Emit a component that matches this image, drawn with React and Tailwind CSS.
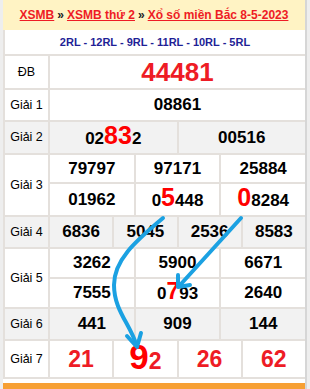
import React from "react";

const font = { fontFamily: '"Liberation Sans", Arial, sans-serif' };

const Hi = ({ children, size = "text-[25px]" }) => (
  <span className={`text-[#ff0000] ${size} leading-none`}>{children}</span>
);

// one result row: label cell + stacked cell lines
const Row = ({ label, gray, children }) => (
  <div className={`flex border-b-2 border-[#e4e0dc] ${gray ? "bg-[#f2f2f2]" : "bg-white"}`}>
    <div className="w-[45px] shrink-0 flex items-center justify-center border-r-2 border-[#e4e0dc] text-[12.5px] text-black">
      {label}
    </div>
    <div className="flex-1 flex flex-col">{children}</div>
  </div>
);

const Cells = ({ h, items, last }) => (
  <div className={`flex ${h} ${last ? "" : "border-b-2 border-[#e4e0dc]"}`}>
    {items.map((it, i) => (
      <div
        key={i}
        className={`flex-1 flex items-center justify-center font-bold text-[17px] text-black ${
          i < items.length - 1 ? "border-r-2 border-[#e4e0dc]" : ""
        }`}
      >
        {it}
      </div>
    ))}
  </div>
);

export default function App() {
  return (
    <div className="relative w-[310px] h-[389px] bg-[#eeeeee] px-[3px] overflow-hidden" style={font}>
      <div className="flex flex-col h-full bg-white border-r-2 border-[#d6d6d6]">
        {/* header */}
        <div className="h-[30px] shrink-0 bg-[#fff3c4] flex items-center justify-center font-bold text-[12px] whitespace-nowrap">
          <a className="text-[#ee1c25] underline">XSMB</a>
          <span className="text-[#222] mx-[3px]">»</span>
          <a className="text-[#ee1c25] underline">XSMB thứ 2</a>
          <span className="text-[#222] mx-[3px]">»</span>
          <a className="text-[#ee1c25] underline">Xổ số miền Bắc 8-5-2023</a>
        </div>
        <div className="h-[26px] shrink-0 flex items-center justify-center border-l-2 border-b-2 border-[#e4e0dc] font-bold text-[11px] text-[#1f1f96]">
          2RL - 12RL - 9RL - 11RL - 10RL - 5RL
        </div>

        <div className="flex flex-col border-l-2 border-[#e4e0dc]">
          <Row label="ĐB">
            <Cells h="h-[32px]" last items={[<span className="text-[#ee1c25] text-[26px]">44481</span>]} />
          </Row>
          <Row label="Giải 1">
            <Cells h="h-[30px]" last items={["08861"]} />
          </Row>
          <Row label="Giải 2" gray>
            <Cells
              h="h-[31px]"
              last
              items={[
                <span className="flex items-baseline">
                  02<Hi>83</Hi>2
                </span>,
                "00516",
              ]}
            />
          </Row>
          <Row label="Giải 3">
            <Cells h="h-[29px]" items={["79797", "97171", "25884"]} />
            <Cells
              h="h-[31px]"
              last
              items={[
                "01962",
                <span className="flex items-baseline">
                  0<Hi>5</Hi>448
                </span>,
                <span className="flex items-baseline">
                  <Hi>0</Hi>8284
                </span>,
              ]}
            />
          </Row>
          <Row label="Giải 4" gray>
            <Cells h="h-[30px]" last items={["6836", "5045", "2536", "8583"]} />
          </Row>
          <Row label="Giải 5">
            <Cells h="h-[30px]" items={["3262", "5900", "6671"]} />
            <Cells
              h="h-[28px]"
              last
              items={[
                "7555",
                <span className="flex items-baseline">
                  0<Hi size="text-[23px]">7</Hi>93
                </span>,
                "2640",
              ]}
            />
          </Row>
          <Row label="Giải 6" gray>
            <Cells h="h-[30px]" last items={["441", "909", "144"]} />
          </Row>
          <Row label="Giải 7">
            <Cells
              h="h-[36px]"
              last
              items={[
                <span className="text-[#ee1c25] text-[23px] font-bold">21</span>,
                <span className="flex items-baseline text-[#ee1c25] text-[23px] font-bold">
                  <span className="text-[#ff0000] text-[35px] leading-none">9</span>2
                </span>,
                <span className="text-[#ee1c25] text-[23px] font-bold">26</span>,
                <span className="text-[#ee1c25] text-[23px] font-bold">62</span>,
              ]}
            />
          </Row>
        </div>
        <div className="flex-1" />
        <div className="h-[6px] shrink-0 bg-[#f7a034]" />
      </div>

      {/* arrows over the table */}
      <svg className="absolute inset-0 pointer-events-none" width="310" height="389" viewBox="0 0 310 389">
        <g fill="none" stroke="#1ba1e2" strokeWidth="4" strokeLinecap="round" strokeLinejoin="round">
          <path d="M163 218 C140 238 114 258 114 285 C114 310 130 324 136 344" />
          <path d="M127 336 L137 347 L141 333" />
          <path d="M241 218 L181 284" />
          <path d="M178 275 L178 287 L190 285" />
        </g>
      </svg>
    </div>
  );
}
